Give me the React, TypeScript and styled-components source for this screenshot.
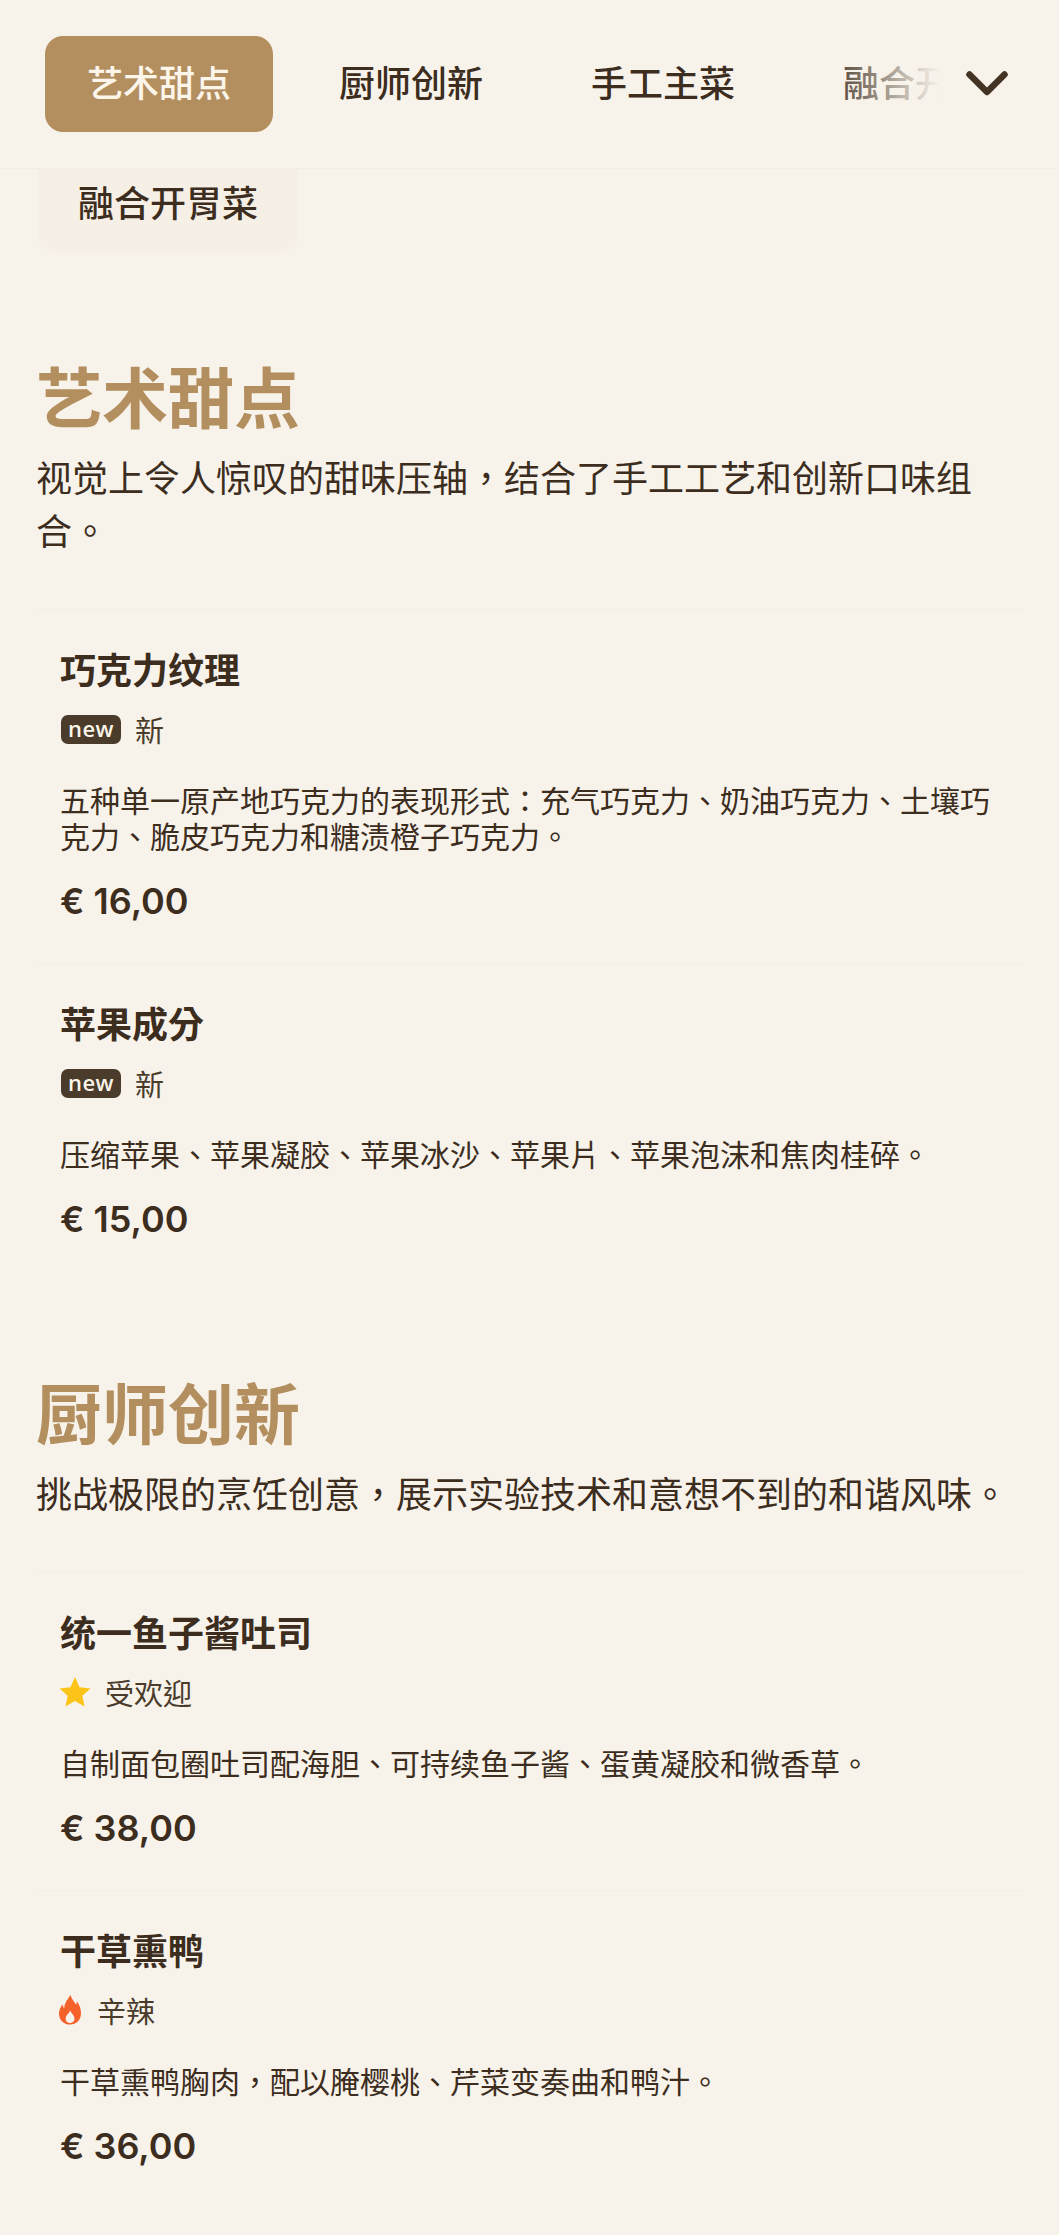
import React from 'react';
import styled, { createGlobalStyle } from 'styled-components';

const Global = createGlobalStyle`
  html, body { margin: 0; padding: 0; background: #f8f3ea; }
  body { font-family: Inter, "Noto Sans CJK TC", "Noto Sans CJK SC", sans-serif; color: #3c2d1e; }
  * { box-sizing: border-box; }
`;

const Page = styled.div`
  width: 1059px;
  height: 2235px;
  overflow: hidden;
  background: #f8f3ea;
`;

const Header = styled.header`
  position: relative;
  height: 169px;
  display: flex;
  align-items: flex-start;
  border-bottom: 1px solid #f3eee4;
  overflow: hidden;
`;

const TabStrip = styled.nav`
  display: flex;
  gap: 24px;
  padding: 36px 0 0 45px;
  flex: 1;
  min-width: 0;
  overflow: hidden;
`;

const Tab = styled.button<{ $active?: boolean }>`
  flex: none;
  height: 96px;
  padding: 0 42px 6px;
  border: 0;
  border-radius: 18px;
  font: inherit;
  font-size: 36px;
  font-weight: 500;
  color: ${p => (p.$active ? '#fbf5ea' : '#3c2d1e')};
  background: ${p => (p.$active ? '#b38f60' : 'transparent')};
`;

const Fade = styled.div`
  position: absolute;
  top: 0;
  bottom: 1px;
  right: 119px;
  width: 120px;
  background: linear-gradient(to right, rgba(248, 243, 234, 0), #f8f3ea);
`;

const ChevronBox = styled.div`
  flex: none;
  position: relative;
  width: 119px;
  height: 168px;
  padding-right: 25px;
  display: flex;
  align-items: center;
  justify-content: center;
  background: #f8f3ea;
`;

const Overflow = styled.button`
  display: block;
  margin-left: 37px;
  width: 262px;
  height: 83px;
  padding: 0 0 20px;
  border: 0;
  border-radius: 0 0 18px 18px;
  background: #f5efe5;
  font: inherit;
  font-size: 36px;
  font-weight: 500;
  color: #3c2d1e;
`;

const Section = styled.section<{ $gap: number }>`
  margin-top: ${p => p.$gap}px;
  padding: 0 37px 0 36px;
`;

const SectionTitle = styled.h2`
  margin: 0;
  padding-top: 3px;
  font-size: 66px;
  line-height: 78px;
  font-weight: 700;
  color: #b38f60;
`;

const SectionText = styled.p`
  margin: 15px 0 0;
  font-size: 36px;
  line-height: 53px;
  color: #3c2d1e;
`;

const Item = styled.article`
  margin-left: 1px;
  padding: 36px 24px 37px 23px;
  border-top: 1px solid #f3ede2;
`;

const ItemList = styled.div`
  margin-top: 50px;
`;

const ItemName = styled.h3`
  margin: 0;
  font-size: 36px;
  line-height: 50px;
  font-weight: 700;
  color: #3c2d1e;
`;

const Tag = styled.div<{ $gap: number }>`
  margin-top: 11px;
  height: 44px;
  display: flex;
  align-items: center;
  gap: ${p => p.$gap}px;
  font-size: 29px;
  color: #4a3b2b;
`;

const NewBadge = styled.span`
  width: 60px;
  height: 29px;
  margin-left: 1px;
  border-radius: 7px;
  background: #4a3b2b;
  color: #fbf5ea;
  display: flex;
  align-items: center;
  justify-content: center;
  font-family: "Open Sans", Inter, sans-serif;
  font-size: 22px;
  font-weight: 600;
  letter-spacing: 0.5px;
  padding-bottom: 3px;
`;

const StarIcon = styled.svg`
  flex: none;
  margin-left: -1px;
`;

const FlameIcon = styled.svg`
  flex: none;
  margin-left: -1px;
`;

const ItemText = styled.p`
  margin: 32px 0 0;
  font-size: 30px;
  line-height: 36px;
  color: #3c2d1e;
`;

const Price = styled.div`
  margin-top: 21px;
  font-size: 36px;
  line-height: 50px;
  font-weight: 600;
  color: #3c2d1e;
`;

const Star = () => (
  <StarIcon width="32" height="32" viewBox="0 0 24 24"><path fill="#fcc419" d="M12 .8l3.400 7.600 8.200.9-6.100 5.500 1.700 8.100L12 18.800l-7.200 4.100 1.700-8.100L.4 9.300l8.200-.9z" /></StarIcon>
);

const Flame = () => (
  <FlameIcon width="22" height="30" viewBox="0 0 22 30">
    <path fill="#f4622a" fillRule="evenodd" d="M11.500 0c1.200 4.400 3.700 6.600 5.600 9.800.5-1 .8-2.200.7-3.600C20.400 9.500 22 13.400 22 18.200 22 25 17.300 29.500 11 29.500S0 25 0 18.400C0 14.700 1.700 11.700 3.700 9.200c.1 1.700.6 3.100 1.500 4.100C5.500 8 8.500 4.300 11.500 0zM11.300 15.500c-.8 2.300-4.700 4.800-4.700 8.300 0 2.600 1.900 4.200 4.400 4.200s4.500-1.700 4.500-4.300c0-3.200-3-5-4.200-8.200z" />
  </FlameIcon>
);

const Chevron = () => (
  <svg width="42" height="26" viewBox="0 0 42 26" fill="none">
    <path d="M3.500 3.500L21 21 38.500 3.500" stroke="#433323" strokeWidth="6.500" strokeLinecap="round" strokeLinejoin="round" />
  </svg>
);

type Dish = { name: string; tag: 'new' | 'star' | 'fire'; text: string; price: string };

const TagRow = ({ tag }: { tag: Dish['tag'] }) => {
  if (tag === 'new') return <Tag $gap={14}><NewBadge>new</NewBadge>新</Tag>;
  if (tag === 'star') return <Tag $gap={14}><Star />受欢迎</Tag>;
  return <Tag $gap={16}><Flame />辛辣</Tag>;
};

const sections: { title: string; text: string; gap: number; dishes: Dish[] }[] = [
  {
    title: '艺术甜点',
    text: '视觉上令人惊叹的甜味压轴，结合了手工工艺和创新口味组合。',
    gap: 105,
    dishes: [
      { name: '巧克力纹理', tag: 'new', text: '五种单一原产地巧克力的表现形式：充气巧克力、奶油巧克力、土壤巧克力、脆皮巧克力和糖渍橙子巧克力。', price: '€ 16,00' },
      { name: '苹果成分', tag: 'new', text: '压缩苹果、苹果凝胶、苹果冰沙、苹果片、苹果泡沫和焦肉桂碎。', price: '€ 15,00' },
    ],
  },
  {
    title: '厨师创新',
    text: '挑战极限的烹饪创意，展示实验技术和意想不到的和谐风味。',
    gap: 92,
    dishes: [
      { name: '统一鱼子酱吐司', tag: 'star', text: '自制面包圈吐司配海胆、可持续鱼子酱、蛋黄凝胶和微香草。', price: '€ 38,00' },
      { name: '干草熏鸭', tag: 'fire', text: '干草熏鸭胸肉，配以腌樱桃、芹菜变奏曲和鸭汁。', price: '€ 36,00' },
    ],
  },
];

export default function App() {
  return (
    <Page>
      <Global />
      <Header>
        <TabStrip>
          <Tab $active>艺术甜点</Tab>
          <Tab>厨师创新</Tab>
          <Tab>手工主菜</Tab>
          <Tab>融合开胃菜</Tab>
        </TabStrip>
        <Fade />
        <ChevronBox><Chevron /></ChevronBox>
      </Header>
      <Overflow>融合开胃菜</Overflow>
      {sections.map(s => (
        <Section key={s.title} $gap={s.gap}>
          <SectionTitle>{s.title}</SectionTitle>
          <SectionText>{s.text}</SectionText>
          <ItemList>
            {s.dishes.map(d => (
              <Item key={d.name}>
                <ItemName>{d.name}</ItemName>
                <TagRow tag={d.tag} />
                <ItemText>{d.text}</ItemText>
                <Price>{d.price}</Price>
              </Item>
            ))}
          </ItemList>
        </Section>
      ))}
    </Page>
  );
}
